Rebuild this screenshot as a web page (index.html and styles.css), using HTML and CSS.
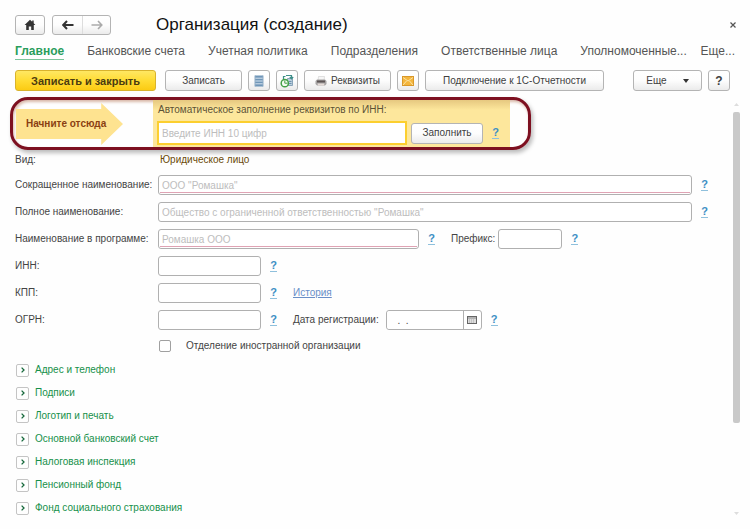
FILE: index.html
```html
<!DOCTYPE html>
<html lang="ru">
<head>
<meta charset="utf-8">
<title>Организация (создание)</title>
<link rel="stylesheet" href="styles.css">
</head>
<body>
<header class="titlebar">
  <button class="btn icon-btn home" aria-label="Домой">
    <svg width="12" height="12" viewBox="0 0 12 12"><path d="M6 0.8 0.6 6h1.6v5h2.6V7.6h2.4V11h2.6V6h1.6L9.7 4.2V1.5H8.2v1.3z" fill="#333"/></svg>
  </button>
  <div class="nav-pair">
    <button class="nav-btn" aria-label="Назад"><svg width="12" height="10" viewBox="0 0 12 10"><path d="M5 1 1.2 5 5 9M1.5 5H11.5" fill="none" stroke="#333" stroke-width="2"/></svg></button>
    <button class="nav-btn" aria-label="Вперед"><svg width="12" height="10" viewBox="0 0 12 10"><path d="M7 1 10.8 5 7 9M10.5 5H.5" fill="none" stroke="#aaa" stroke-width="1.6"/></svg></button>
  </div>
  <h1>Организация (создание)</h1>
  <button class="close" aria-label="Закрыть"><svg width="6" height="6" viewBox="0 0 6 6"><path d="M.5.5l5 5M5.5.5l-5 5" stroke="#555" stroke-width="1.2"/></svg></button>
</header>

<nav class="tabs">
  <div class="tab-list">
    <a class="active" href="#">Главное</a>
    <a href="#">Банковские счета</a>
    <a href="#">Учетная политика</a>
    <a href="#">Подразделения</a>
    <a href="#">Ответственные лица</a>
    <a href="#">Уполномоченные...</a>
  </div>
  <a href="#">Еще...</a>
</nav>

<div class="toolbar">
  <button class="btn primary">Записать и закрыть</button>
  <button class="btn save">Записать</button>
  <button class="btn icon-btn" aria-label="Список">
    <svg width="10" height="12" viewBox="0 0 10 12"><rect x="1" y=".5" width="8" height="11" fill="#6f96b8"/><path d="M1 3.2h8M1 6h8M1 8.8h8" stroke="#d5e2ee"/><path d="M1 .5v11M9 .5v11" stroke="#8fabc4"/></svg>
  </button>
  <button class="btn icon-btn" aria-label="Отчеты">
    <svg width="14" height="14" viewBox="0 0 14 14"><path d="M7.500 4.500h5v7h-5z" fill="#bcd0de" stroke="#8aa5ba"/><path d="M3.500 5V2.500h2M6 1.500h5.500V4M9.800 3l1.700 1.800L13.200 3" fill="none" stroke="#3f8f8a" stroke-width="1.200"/><path d="M9 7.500h2.500M9 9.500h2.500" stroke="#6c91ae"/><circle cx="4.800" cy="9.200" r="3.600" fill="#f4faf2" stroke="#43a047" stroke-width="1.500"/><path d="M4.800 6.500v2.700h2.700" fill="none" stroke="#43a047"/></svg>
  </button>
  <button class="btn details">
    <svg width="12" height="12" viewBox="0 0 12 12"><path d="M3.500 1.500h6L9 6H3z" fill="#f6f6f6" stroke="#ccc" stroke-width=".6"/><path d="M.5 6 2 4.500h8L11.500 6v3L10 10.500H2L.5 9z" fill="#a5a3a3"/><path d="M2 5.500h8v2H2z" fill="#5d5555"/><path d="M2.500 8.500h7l-.5 2H3z" fill="#e6dcd8"/></svg>
    Реквизиты
  </button>
  <button class="btn icon-btn" aria-label="Письмо">
    <svg width="12" height="10" viewBox="0 0 12 10"><rect x=".5" y=".5" width="11" height="9" fill="#f4b63d" stroke="#d9982a"/><path d="M1 1.500l5 3.500 5-3.500M1 9l3.500-4M11 9 7.500 5" fill="none" stroke="#fbe3a6"/></svg>
  </button>
  <button class="btn connect">Подключение к 1С-Отчетности</button>
  <button class="btn more">Еще <svg width="6" height="4" viewBox="0 0 6 4"><path d="M0 0h6L3 4z" fill="#333"/></svg></button>
  <button class="btn icon-btn question">?</button>
</div>

<main class="content">
  <form class="form">
    <section class="callout">
      <div class="start">
        <svg class="arrow" viewBox="0 0 108 42" preserveAspectRatio="none"><path d="M0 6h86V0l22 21-22 21v-6H0z" fill="#fee390"/></svg>
        <span>Начните отсюда</span>
      </div>
      <div class="autofill">
        <label for="auto">Автоматическое заполнение реквизитов по ИНН:</label>
        <div class="auto-row">
          <input id="auto" class="auto-input" placeholder="Введите ИНН 10 цифр">
          <button type="button" class="btn fill">Заполнить</button>
          <a class="help" href="#">?</a>
        </div>
      </div>
    </section>

    <div class="row kind"><span class="label">Вид:</span><span class="kind-value">Юридическое лицо</span></div>
    <div class="row"><label class="label" for="short">Сокращенное наименование:</label><div class="required grow"><input id="short" placeholder="ООО &quot;Ромашка&quot;"></div><a class="help" href="#">?</a></div>
    <div class="row"><label class="label" for="full">Полное наименование:</label><input id="full" class="grow" placeholder="Общество с ограниченной ответственностью &quot;Ромашка&quot;"><a class="help" href="#">?</a></div>
    <div class="row"><label class="label" for="name">Наименование в программе:</label><div class="required medium"><input id="name" placeholder="Ромашка ООО"></div><a class="help" href="#">?</a><label class="second" for="prefix">Префикс:</label><input id="prefix" class="prefix"><a class="help" href="#">?</a></div>
    <div class="row"><label class="label" for="inn">ИНН:</label><input id="inn" class="small"><a class="help" href="#">?</a></div>
    <div class="row"><label class="label" for="kpp">КПП:</label><input id="kpp" class="small"><a class="help" href="#">?</a><a class="history" href="#">История</a></div>
    <div class="row"><label class="label" for="ogrn">ОГРН:</label><input id="ogrn" class="small"><a class="help" href="#">?</a><label class="second" for="date">Дата регистрации:</label>
      <div class="date"><input id="date" value=" .  ."><button type="button" aria-label="Календарь"><svg width="10" height="8" viewBox="0 0 10 8"><rect x=".5" y=".5" width="9" height="7" fill="#ddd" stroke="#666"/><path d="M1 2h8" stroke="#888"/><path d="M2 4h6M2 6h6" stroke="#aaa" stroke-dasharray="1 1"/></svg></button></div><a class="help" href="#">?</a></div>
    <div class="row check"><input type="checkbox" id="foreign"><label for="foreign">Отделение иностранной организации</label></div>

    <div class="groups">
      <button type="button" class="group"><i><svg width="4" height="6" viewBox="0 0 4 6"><path d="M.6.6 3 3 .6 5.400" fill="none" stroke="#17693c" stroke-width="1.300"/></svg></i>Адрес и телефон</button>
      <button type="button" class="group"><i><svg width="4" height="6" viewBox="0 0 4 6"><path d="M.6.6 3 3 .6 5.400" fill="none" stroke="#17693c" stroke-width="1.300"/></svg></i>Подписи</button>
      <button type="button" class="group"><i><svg width="4" height="6" viewBox="0 0 4 6"><path d="M.6.6 3 3 .6 5.400" fill="none" stroke="#17693c" stroke-width="1.300"/></svg></i>Логотип и печать</button>
      <button type="button" class="group"><i><svg width="4" height="6" viewBox="0 0 4 6"><path d="M.6.6 3 3 .6 5.400" fill="none" stroke="#17693c" stroke-width="1.300"/></svg></i>Основной банковский счет</button>
      <button type="button" class="group"><i><svg width="4" height="6" viewBox="0 0 4 6"><path d="M.6.6 3 3 .6 5.400" fill="none" stroke="#17693c" stroke-width="1.300"/></svg></i>Налоговая инспекция</button>
      <button type="button" class="group"><i><svg width="4" height="6" viewBox="0 0 4 6"><path d="M.6.6 3 3 .6 5.400" fill="none" stroke="#17693c" stroke-width="1.300"/></svg></i>Пенсионный фонд</button>
      <button type="button" class="group"><i><svg width="4" height="6" viewBox="0 0 4 6"><path d="M.6.6 3 3 .6 5.400" fill="none" stroke="#17693c" stroke-width="1.300"/></svg></i>Фонд социального страхования</button>
    </div>
  </form>
  <div class="scrollbar">
    <svg width="5" height="3" viewBox="0 0 5 3"><path d="M0 3h5L2.500 0z" fill="#ddd"/></svg>
    <div class="track"><div class="thumb"></div></div>
    <svg width="5" height="3" viewBox="0 0 5 3"><path d="M0 0h5L2.500 3z" fill="#ddd"/></svg>
  </div>
</main>
</body>
</html>
```
FILE: styles.css
```css
* { box-sizing: border-box; }

body {
  margin: 0;
  padding-top: 15px;
  background: #fefefe;
  color: #444;
  font: 10px/14px "Liberation Sans", Arial, sans-serif;
}

svg { display: block; flex: none; }
button, input { font: inherit; color: inherit; margin: 0; }

.titlebar {
  display: flex;
  align-items: center;
  height: 20px;
  padding: 0 14px 0 15px;
}

.btn {
  display: flex;
  align-items: center;
  justify-content: center;
  height: 21px;
  padding: 0;
  border: 1px solid #b4b4b4;
  border-radius: 3px;
  background: linear-gradient(#fff, #fdfdfd 50%, #ebebeb);
  color: #404040;
  white-space: nowrap;
}

.icon-btn { width: 22px; }
.home { width: 30px; height: 20px; margin-right: 7px; }

.nav-pair {
  display: flex;
  height: 20px;
  border: 1px solid #b4b4b4;
  border-radius: 3px;
  background: linear-gradient(#fff, #fdfdfd 50%, #ebebeb);
}

.nav-btn {
  display: flex;
  align-items: center;
  justify-content: center;
  width: 29px;
  padding: 0;
  border: 0;
  background: none;
}

.nav-btn + .nav-btn { width: 28px; border-left: 1px solid #ddd; }

h1 {
  flex: 1;
  margin: 0 0 0 45px;
  font-size: 17px;
  font-weight: normal;
  line-height: 22px;
  color: #111;
}

.close { padding: 0; border: 0; background: none; }

.tabs {
  display: flex;
  justify-content: space-between;
  padding: 0 15px;
  margin-top: 9px;
  font-size: 12px;
  line-height: 15px;
  white-space: nowrap;
}

.tab-list { display: flex; gap: 23px; }
.tabs a { color: #555; text-decoration: none; }
.tabs .active { color: #2a9d5c; font-weight: bold; border-bottom: 1px solid #7cc49a; }

.toolbar {
  display: flex;
  gap: 6px;
  margin-top: 10px;
  padding: 0 20px 0 15px;
}

.primary {
  width: 141px;
  margin-right: 3px;
  border-color: #d9b32c;
  background: linear-gradient(#ffe763, #ffdc34 50%, #fbcb13);
  color: #4b3c10;
  font-size: 11px;
  font-weight: bold;
}

.save { width: 77px; }
.details { width: 87px; gap: 4px; }
.connect { width: 179px; }
.more { width: 69px; gap: 16px; margin-left: auto; }
.question { font-size: 12px; font-weight: bold; }

.content {
  display: flex;
  justify-content: space-between;
  padding: 6px 10px 0 10px;
}

.form { flex: 1; padding-right: 24px; }

.callout {
  display: flex;
  width: 521px;
  height: 53px;
  border: 3px solid #7d1020;
  border-radius: 18px;
  box-shadow: 2px 3px 4px #bbb, inset 1px 2px 3px #d8b8a8;
}

.start {
  display: grid;
  align-items: center;
  width: 140px;
  padding-left: 3px;
  font-weight: bold;
  color: #8a3f12;
}

.start > * { grid-area: 1 / 1; }
.start span { padding-left: 10px; }
.arrow { width: 107px; height: 42px; }

.autofill {
  width: 357px;
  padding: 2px 0 0 4px;
  background: linear-gradient(#e6c880, #fde79c 10px);
  color: #5c5236;
}

.autofill label { display: block; line-height: 16px; padding-left: 1px; }
.auto-row { display: flex; align-items: center; margin-top: 3px; }

input {
  height: 20px;
  min-width: 0;
  padding: 0 3px;
  border: 1px solid #b0b0b0;
  border-radius: 3px;
  background: #fff;
}

input::placeholder { color: #bdbdbd; opacity: 1; }

.auto-input { width: 250px; height: 24px; border: 2px solid #fccf2f; border-radius: 0; }
.fill { width: 72px; margin-left: 4px; }

.help {
  width: 7px;
  margin-left: 9px;
  border-bottom: 1px solid #8fc0dc;
  color: #3d8fc4;
  font-size: 11px;
  font-weight: bold;
  line-height: 11px;
  text-align: center;
  text-decoration: none;
}

.row {
  display: flex;
  align-items: center;
  height: 20px;
  margin: 0 0 7px 5px;
}

.kind { height: 14px; margin-top: 3px; margin-bottom: 8px; }
.kind-value { color: #6b4a08; padding-left: 2px; }
.label { width: 143px; flex: none; white-space: nowrap; }
.grow { flex: 1; }
.required { display: flex; position: relative; }
.required input { flex: 1; }

.required::after {
  content: "";
  position: absolute;
  inset: auto 2px 2px 2px;
  border-bottom: 1px solid #dfa3b4;
}

.medium { width: 261px; }
.small { width: 103px; }
.second { margin-left: 16px; }
.prefix { width: 64px; margin-left: 3px; }
.history { margin-left: 16px; color: #6a8fc8; }

.date {
  display: flex;
  width: 96px;
  height: 20px;
  margin-left: 7px;
  border: 1px solid #b0b0b0;
  border-radius: 3px;
  background: #fff;
}

.date input { flex: 1; height: 18px; border: 0; padding-left: 8px; }

.date button {
  display: flex;
  align-items: center;
  justify-content: center;
  width: 18px;
  padding: 0;
  border: 0;
  border-left: 1px solid #b0b0b0;
  background: none;
}

.check { gap: 15px; height: 18px; padding-left: 144px; margin-bottom: 5px; }

.check input {
  appearance: none;
  width: 12px;
  height: 12px;
  padding: 0;
  border-color: #a0a0a0;
  border-radius: 2px;
}

.groups { display: flex; flex-direction: column; gap: 9px; align-items: flex-start; padding: 3px 0 0 6px; }

.group {
  display: flex;
  align-items: center;
  gap: 6px;
  height: 14px;
  padding: 0;
  border: 0;
  background: none;
  color: #16904a;
}

.group i {
  display: flex;
  align-items: center;
  justify-content: center;
  width: 13px;
  height: 13px;
  border: 1px solid #c4c4c4;
  border-radius: 2px;
}

.scrollbar {
  display: flex;
  flex-direction: column;
  align-items: center;
  width: 8px;
  padding-top: 6px;
}

.track { flex: 1; width: 7px; margin: 6px 0; }
.thumb { height: 79%; border-radius: 2px; background: #c9c9c9; }
```
